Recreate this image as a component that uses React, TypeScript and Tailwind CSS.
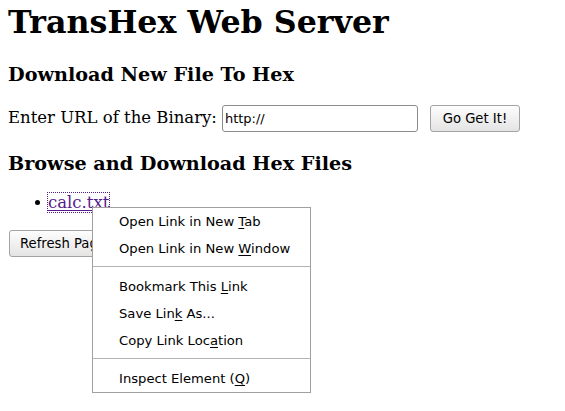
const serif = "font-['DejaVu_Serif','Liberation_Serif',serif]";
const sans = "font-['DejaVu_Sans','Liberation_Sans',sans-serif]";

function MenuItem({ before, mark, after }: { before: string; mark: string; after: string }) {
  return (
    <div className="h-[27px] leading-[27px] pl-[26px] whitespace-nowrap">
      {before}
      <span className="underline underline-offset-[2px] decoration-1">{mark}</span>
      {after}
    </div>
  );
}

function Separator() {
  return <div className="mt-[4px] mb-[6px] border-t border-[#b4b4b4]" />;
}

export default function App() {
  return (
    <div className={`relative min-h-[411px] bg-white text-black pl-[8px] pt-[3px] ${serif}`}>
      <h1 className="text-[31.7px] leading-[37px] font-bold">TransHex Web Server</h1>

      <h2 className="mt-[24px] text-[19.2px] leading-[22px] font-bold">Download New File To Hex</h2>

      <div className="mt-[19px] flex items-center h-[27px] text-[16.5px]">
        <span>Enter URL of the Binary:</span>
        <div
          className={`ml-[5px] w-[196px] h-[27px] border border-[#8c8c8c] rounded-[3px] bg-white pl-[2px] flex items-center text-[13px] ${sans}`}
        >
          http://
        </div>
        <button
          className={`ml-[12px] w-[90px] h-[27px] border border-[#a3a3a3] rounded-[3px] bg-gradient-to-b from-[#fdfdfd] to-[#e4e4e4] text-[13.2px] ${sans}`}
        >
          Go Get It!
        </button>
      </div>

      <h3 className="mt-[21px] text-[19.2px] leading-[22px] font-bold">Browse and Download Hex Files</h3>

      <ul className="mt-[18px] text-[16.5px] leading-[19px]">
        <li className="flex items-center">
          <span className="ml-[27px] w-[5px] h-[5px] rounded-full bg-black" />
          <a
            href="#"
            className="ml-[8px] text-[#551a8b] underline underline-offset-[2px] outline-1 outline-dotted outline-[#551a8b]"
          >
            calc.txt
          </a>
        </li>
      </ul>

      <button
        className={`mt-[18px] ml-[1px] h-[27px] pl-[10px] pr-[10px] border border-[#a3a3a3] rounded-[3px] bg-gradient-to-b from-[#fdfdfd] to-[#e4e4e4] text-[13.2px] ${sans}`}
      >
        Refresh Page
      </button>

      <div
        className={`absolute left-[92px] top-[207px] w-[219px] bg-white border border-[#a0a0a0] text-[13.15px] text-black ${sans}`}
      >
        <MenuItem before="Open Link in New " mark="T" after="ab" />
        <MenuItem before="Open Link in New " mark="W" after="indow" />
        <Separator />
        <MenuItem before="Bookmark This " mark="L" after="ink" />
        <MenuItem before="Save Lin" mark="k" after=" As..." />
        <MenuItem before="Copy Link Loc" mark="a" after="tion" />
        <Separator />
        <MenuItem before="Inspect Element (" mark="Q" after=")" />
      </div>
    </div>
  );
}
